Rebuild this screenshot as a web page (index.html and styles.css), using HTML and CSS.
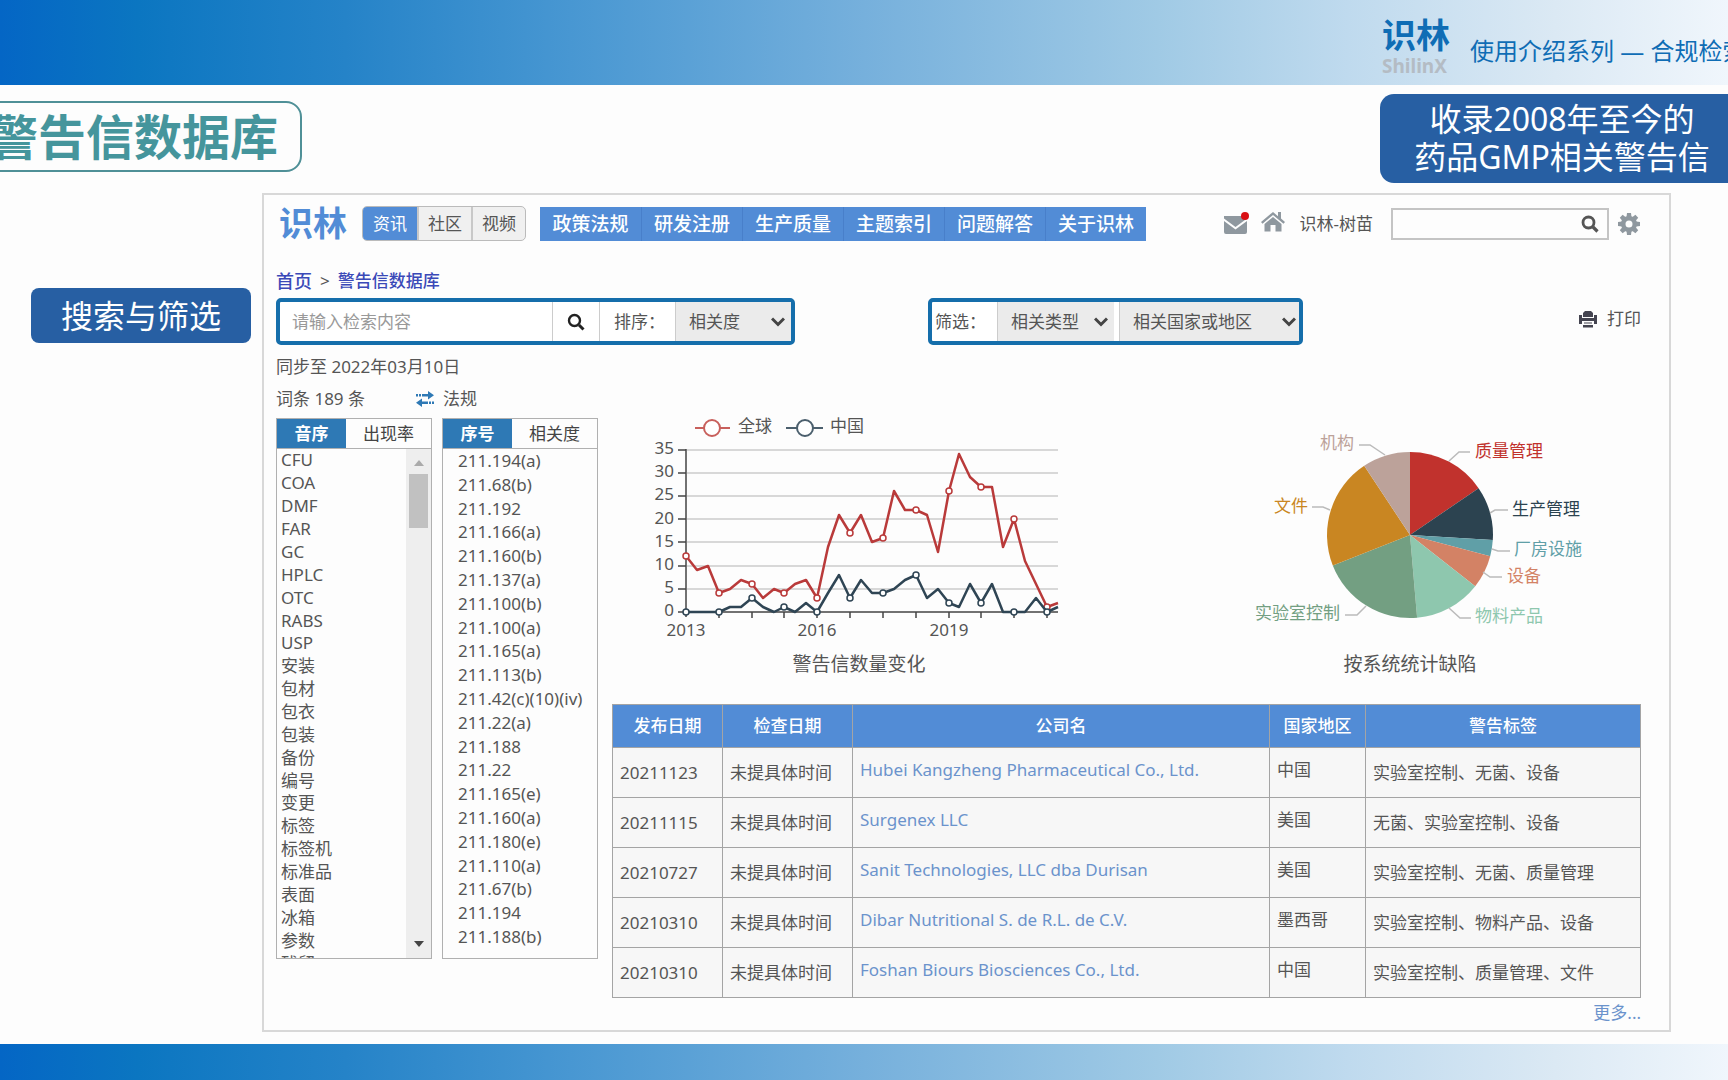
FILE: index.html
```html
<!DOCTYPE html>
<html lang="zh-CN">
<head>
<meta charset="utf-8">
<meta name="viewport" content="width=device-width, initial-scale=1">
<title>识林 警告信数据库</title>
<link rel="stylesheet" href="styles.css">
</head>
<body>
<header class="banner">
  <div class="banner-inner">
    <div class="brand"><span class="brand-cn">识林</span><span class="brand-en">ShilinX</span></div>
    <p class="series">使用介绍系列 — 合规检索</p>
  </div>
</header>

<div class="headline">
  <h1 class="title">警告信数据库</h1>
  <p class="callout">收录2008年至今的<br>药品GMP相关警告信</p>
</div>

<main class="stage">
  <aside class="side"><p class="tag">搜索与筛选</p></aside>

  <section class="app">
    <div class="topbar">
      <a class="logo" href="#">识林</a>
      <div class="segments">
        <button type="button" class="segment active">资讯</button>
        <button type="button" class="segment">社区</button>
        <button type="button" class="segment">视频</button>
      </div>
      <nav class="nav">
        <a href="#">政策法规</a><a href="#">研发注册</a><a href="#">生产质量</a><a href="#">主题索引</a><a href="#">问题解答</a><a href="#">关于识林</a>
      </nav>
      <div class="user">
        <a href="#" class="mail" aria-label="消息">
          <svg width="26" height="24" viewBox="0 0 26 24"><path fill="#8f989f" d="M1 4h23v2.500L12.500 15 1 6.500zM1 9l11.500 8.500L24 9v11a2 2 0 0 1-2 2H3a2 2 0 0 1-2-2z"/><circle cx="22" cy="4" r="4" fill="#d90f14"/></svg>
        </a>
        <a href="#" class="home" aria-label="首页">
          <svg width="24" height="22" viewBox="0 0 24 22"><path fill="#8f989f" d="M12 1 0 11l1.500 1.700L12 4l10.500 8.700L24 11l-4-3.400V1h-3v4.200zM12 6l-8.500 7v7.500h6V14h5v6.500h6V13z"/></svg>
        </a>
        <a href="#" class="username">识林-树苗</a>
        <form class="quick">
          <input type="text" aria-label="站内搜索">
          <button type="button" aria-label="搜索"><svg width="18" height="18" viewBox="0 0 18 18"><circle cx="7.500" cy="7.500" r="5.500" fill="none" stroke="#555" stroke-width="2.800"/><path d="m12 12 4.500 4.500" stroke="#555" stroke-width="3.200"/></svg></button>
        </form>
        <button type="button" class="gear" aria-label="设置"><svg width="24" height="24" viewBox="0 0 24 24"><g fill="#8f989f"><path fill-rule="evenodd" d="M12 4a8 8 0 1 1 0 16 8 8 0 0 1 0-16zm0 4.500a3.500 3.500 0 1 0 0 7 3.500 3.500 0 0 0 0-7z"/><path id="tooth" d="M9.500 5 10 1h4l.5 4z"/><use href="#tooth" transform="rotate(45 12 12)"/><use href="#tooth" transform="rotate(90 12 12)"/><use href="#tooth" transform="rotate(135 12 12)"/><use href="#tooth" transform="rotate(180 12 12)"/><use href="#tooth" transform="rotate(225 12 12)"/><use href="#tooth" transform="rotate(270 12 12)"/><use href="#tooth" transform="rotate(315 12 12)"/></g></svg></button>
      </div>
    </div>

    <nav class="crumbs"><a class="crumb-home" href="#">首页</a><span>&gt;</span><a href="#">警告信数据库</a></nav>

    <div class="toolbar">
      <form class="box search">
        <input type="text" placeholder="请输入检索内容" aria-label="检索内容">
        <button type="button" aria-label="检索"><svg width="18" height="18" viewBox="0 0 18 18"><circle cx="7.500" cy="7.500" r="5.500" fill="none" stroke="#222" stroke-width="2.400"/><path d="m12 12 4.500 4.500" stroke="#222" stroke-width="3"/></svg></button>
        <label for="sort">排序：</label>
        <div class="picker picker-sort"><select id="sort"><option>相关度</option></select><svg width="14" height="10" viewBox="0 0 14 10"><path d="m1 1.500 6 6 6-6"/></svg></div>
      </form>
      <form class="box filter">
        <label for="kind">筛选：</label>
        <div class="picker picker-kind"><select id="kind"><option>相关类型</option></select><svg width="14" height="10" viewBox="0 0 14 10"><path d="m1 1.500 6 6 6-6"/></svg></div>
        <div class="picker picker-area"><select aria-label="国家或地区"><option>相关国家或地区</option></select><svg width="14" height="10" viewBox="0 0 14 10"><path d="m1 1.500 6 6 6-6"/></svg></div>
      </form>
      <button type="button" class="print"><svg width="18" height="18" viewBox="0 0 18 18"><path fill="#444450" d="M4 7V3l2-2h6l2 2v4zM0 5h3v3h12V5h3v9h-3v-3H3v3H0zM5 12.500h8v1H5zM4 15h10v2.500H4z"/></svg>打印</button>
    </div>

    <div class="body">
      <div class="terms">
        <p class="synced">同步至 2022年03月10日</p>
        <div class="counts">
          <span class="count">词条 189 条</span>
          <svg width="18" height="16" viewBox="0 0 18 16"><g fill="#2e79b5"><path d="M6 3h6V0l6 4.200-6 4.200V5.500H6zM0 3h2v2.500H0zM3 3h2v2.500H3zM12 10.500H6v-3L0 11.800 6 16v-3h6zM13 10.500h2V13h-2zM16 10.500h2V13h-2z"/></g></svg>
          <span>法规</span>
        </div>
        <div class="lists">
          <section class="panel">
            <div class="tabs"><button type="button" class="tab active">音序</button><button type="button" class="tab">出现率</button></div>
            <div class="scroller">
              <ul class="words">
                <li>CFU</li><li>COA</li><li>DMF</li><li>FAR</li><li>GC</li><li>HPLC</li><li>OTC</li><li>RABS</li><li>USP</li><li>安装</li><li>包材</li><li>包衣</li><li>包装</li><li>备份</li><li>编号</li><li>变更</li><li>标签</li><li>标签机</li><li>标准品</li><li>表面</li><li>冰箱</li><li>参数</li><li>残留</li>
              </ul>
              <div class="scrollbar"><i class="arrow up"></i><i class="thumb"></i><i class="arrow down"></i></div>
            </div>
          </section>
          <section class="panel">
            <div class="tabs"><button type="button" class="tab active">序号</button><button type="button" class="tab">相关度</button></div>
            <div class="scroller">
              <ul class="rules">
                <li>211.194(a)</li><li>211.68(b)</li><li>211.192</li><li>211.166(a)</li><li>211.160(b)</li><li>211.137(a)</li><li>211.100(b)</li><li>211.100(a)</li><li>211.165(a)</li><li>211.113(b)</li><li>211.42(c)(10)(iv)</li><li>211.22(a)</li><li>211.188</li><li>211.22</li><li>211.165(e)</li><li>211.160(a)</li><li>211.180(e)</li><li>211.110(a)</li><li>211.67(b)</li><li>211.194</li><li>211.188(b)</li>
              </ul>
            </div>
          </section>
        </div>
      </div>

      <div class="results">
        <div class="charts">
          <figure>
            <svg class="chart" width="440" height="250" viewBox="0 0 440 250" role="img" aria-label="警告信数量变化">
              <g fill="#fff" stroke-width="2">
                <g stroke="#c8605c"><path d="M56 28h35"/><circle cx="73" cy="28" r="8"/></g>
                <g stroke="#4b5f6d"><path d="M147 28h37"/><circle cx="166" cy="28" r="8"/></g>
              </g>
              <text x="99" y="32">全球</text><text x="191" y="32">中国</text>
              <path d="M48 50h371M48 73h371M48 96h371M48 119h371M48 142h371M48 166h371M48 189h371" stroke="#ccc" stroke-width="1.500"/>
              <path d="M47 49v168M39 50h8M39 73h8M39 96h8M39 119h8M39 142h8M39 166h8M39 189h8M39 212h380M80 212v6M113 212v6M145 212v6M178 212v6M211 212v6M244 212v6M277 212v6M310 212v6M342 212v6M375 212v6M408 212v6" fill="none" stroke="#444" stroke-width="1.500"/>
              <g text-anchor="end">
                <text x="35" y="54">35</text><text x="35" y="77">30</text><text x="35" y="100">25</text><text x="35" y="124">20</text><text x="35" y="147">15</text><text x="35" y="170">10</text><text x="35" y="193">5</text><text x="35" y="216">0</text>
              </g>
              <g text-anchor="middle"><text x="47" y="236">2013</text><text x="178" y="236">2016</text><text x="310" y="236">2019</text></g>
              <g fill="none" stroke="#b93a3a" stroke-width="2.500" stroke-linejoin="round">
                <polyline points="47,156 58,170 69,166 80,193 91,189 102,180 113,184 124,198 135,189 145,193 156,184 167,180 178,198 189,147 200,115 211,133 222,115 233,142 244,138 255,91 266,110 277,110 288,115 299,152 310,91 320,54 331,77 342,87 353,87 364,147 375,119 386,161 397,184 408,207 419,203"/>
                <g fill="#fff" stroke-width="1.500"><circle cx="47" cy="156" r="3"/><circle cx="80" cy="193" r="3"/><circle cx="113" cy="184" r="3"/><circle cx="145" cy="193" r="3"/><circle cx="178" cy="198" r="3"/><circle cx="211" cy="133" r="3"/><circle cx="244" cy="138" r="3"/><circle cx="277" cy="110" r="3"/><circle cx="310" cy="91" r="3"/><circle cx="342" cy="87" r="3"/><circle cx="375" cy="119" r="3"/><circle cx="408" cy="207" r="3"/></g>
              </g>
              <g fill="none" stroke="#2f4554" stroke-width="2.500" stroke-linejoin="round">
                <polyline points="47,212 58,212 69,212 80,212 91,207 102,207 113,198 124,207 135,212 145,207 156,212 167,203 178,212 189,193 200,175 211,198 222,180 233,193 244,193 255,189 266,180 277,175 288,198 299,189 310,203 320,207 331,184 342,203 353,184 364,212 375,212 386,212 397,198 408,212 419,207"/>
                <g fill="#fff" stroke-width="1.500"><circle cx="47" cy="212" r="3"/><circle cx="80" cy="212" r="3"/><circle cx="113" cy="198" r="3"/><circle cx="145" cy="207" r="3"/><circle cx="178" cy="212" r="3"/><circle cx="211" cy="198" r="3"/><circle cx="244" cy="193" r="3"/><circle cx="277" cy="175" r="3"/><circle cx="310" cy="203" r="3"/><circle cx="342" cy="203" r="3"/><circle cx="375" cy="212" r="3"/><circle cx="408" cy="212" r="3"/></g>
              </g>
            </svg>
            <figcaption>警告信数量变化</figcaption>
          </figure>
          <figure>
            <svg class="chart" width="360" height="250" viewBox="0 -10 360 250" role="img" aria-label="按系统统计缺陷">
              <path fill="#c1322d" d="M180 125V42A83 83 0 0 1 248.600 78.200z"/>
              <path fill="#2c4350" d="M180 125 248.600 78.200A83 83 0 0 1 262.800 130.100z"/>
              <path fill="#609fa7" d="M180 125 262.800 130.100A83 83 0 0 1 260.200 146.200z"/>
              <path fill="#d38265" d="M180 125 260.200 146.200A83 83 0 0 1 245.200 176.300z"/>
              <path fill="#8ec7ae" d="M180 125 245.200 176.300A83 83 0 0 1 187.100 207.700z"/>
              <path fill="#739f82" d="M180 125 187.100 207.700A83 83 0 0 1 102.800 155.400z"/>
              <path fill="#c98622" d="M180 125 102.800 155.400A83 83 0 0 1 134.200 55.800z"/>
              <path fill="#bca29a" d="M180 125 134.200 55.800A83 83 0 0 1 180 42z"/>
              <path fill="none" stroke="#bbb" stroke-width="1.500" d="M219 51l10-9h11M260 103l5-3h13M262 139l6 2h12M253 162l7 5h12M219 198l11 10h11M136 196l-9 9h-12M100 100l-7-3H82M155 45l-15-10h-11"/>
              <text x="245" y="47" fill="#c1322d">质量管理</text>
              <text x="282" y="105" fill="#2c4350">生产管理</text>
              <text x="284" y="145" fill="#609fa7">厂房设施</text>
              <text x="277" y="172" fill="#d38265">设备</text>
              <text x="245" y="212" fill="#8ec7ae">物料产品</text>
              <g text-anchor="end">
                <text x="110" y="209" fill="#739f82">实验室控制</text>
                <text x="78" y="102" fill="#c98622">文件</text>
                <text x="124" y="39" fill="#bca29a">机构</text>
              </g>
            </svg>
            <figcaption>按系统统计缺陷</figcaption>
          </figure>
        </div>

        <table class="letters">
          <colgroup><col class="c-date"><col class="c-check"><col><col class="c-area"><col class="c-tags"></colgroup>
          <thead><tr><th>发布日期</th><th>检查日期</th><th>公司名</th><th>国家地区</th><th>警告标签</th></tr></thead>
          <tbody>
            <tr><td>20211123</td><td>未提具体时间</td><td class="raised"><a href="#">Hubei Kangzheng Pharmaceutical Co., Ltd.</a></td><td class="raised">中国</td><td>实验室控制、无菌、设备</td></tr>
            <tr><td>20211115</td><td>未提具体时间</td><td class="raised"><a href="#">Surgenex LLC</a></td><td class="raised">美国</td><td>无菌、实验室控制、设备</td></tr>
            <tr><td>20210727</td><td>未提具体时间</td><td class="raised"><a href="#">Sanit Technologies, LLC dba Durisan</a></td><td class="raised">美国</td><td>实验室控制、无菌、质量管理</td></tr>
            <tr><td>20210310</td><td>未提具体时间</td><td class="raised"><a href="#">Dibar Nutritional S. de R.L. de C.V.</a></td><td class="raised">墨西哥</td><td>实验室控制、物料产品、设备</td></tr>
            <tr><td>20210310</td><td>未提具体时间</td><td class="raised"><a href="#">Foshan Biours Biosciences Co., Ltd.</a></td><td class="raised">中国</td><td>实验室控制、质量管理、文件</td></tr>
          </tbody>
        </table>
        <a class="more" href="#">更多...</a>
      </div>
    </div>
  </section>
</main>
<footer class="footer"></footer>
</body>
</html>
```
FILE: styles.css
```css
* { box-sizing: border-box; }

:root {
  --blue: #528cd6;
  --deep: #275fa3;
  --frame: #156eab;
  --line: #b0b0b0;
  --text: #555;
  --sweep: linear-gradient(90deg, #0466c5 0%, #0b76c1 8%, #2583c8 20%, #4897d2 33%, #76b0dc 50%, #a0cae5 67%, #bfdaee 78%, #dbe9f4 90%, #f0f6fc 100%);
}

body {
  margin: 0;
  min-height: 100vh;
  display: flex;
  flex-direction: column;
  overflow-x: hidden;
  background: #fdfdfd;
  color: var(--text);
  font: 17px/24px "Noto Sans", "Noto Sans CJK SC", sans-serif;
}

p, h1, ul, figure { margin: 0; padding: 0; }
ul { list-style: none; }
a { color: inherit; text-decoration: none; }
svg { display: block; }
button, input, select {
  margin: 0;
  padding: 0;
  border: 0;
  border-radius: 0;
  background: none;
  color: inherit;
  font: inherit;
}

/* banner */
.banner { height: 85px; background: var(--sweep); display: flex; justify-content: flex-end; }
.banner-inner { flex: 0 0 346px; display: flex; gap: 18px; overflow: hidden; white-space: nowrap; color: #0f6db5; }
.brand { flex: 0 0 70px; display: flex; flex-direction: column; padding-top: 17px; font-weight: 700; }
.brand-cn { font-size: 34px; line-height: 37px; }
.brand-en { font-size: 19px; line-height: 24px; color: #b4bcc4; }
.series { font-size: 24px; line-height: 32px; padding-top: 35px; }

.headline { display: flex; justify-content: space-between; align-items: flex-start; height: 108px; padding-top: 9px; }
.title {
  margin: 7px 0 0 -40px;
  padding: 0 22px 0 28px;
  border: 2px solid #4f9097;
  border-radius: 16px;
  color: #45959c;
  font-size: 48px;
  line-height: 67px;
}
.callout {
  flex: 0 0 364px;
  margin-right: -16px;
  padding: 6px 0 7px;
  border-radius: 14px;
  background: var(--deep);
  color: #fff;
  font-size: 32px;
  line-height: 38px;
  text-align: center;
}

/* stage */
.stage { flex: 1; display: flex; align-items: flex-start; padding-right: 57px; margin-bottom: 11px; }
.side { flex: 0 0 262px; padding: 95px 11px 0 31px; }
.tag { border-radius: 8px; background: var(--deep); color: #fff; font-size: 32px; line-height: 55px; text-align: center; }

.app { flex: 1; min-width: 0; border: 2px solid #d8d8d8; padding: 11px 28px 5px 12px; }

.topbar { display: flex; align-items: center; height: 35px; }
.logo { margin-left: 3px; color: var(--blue); font-size: 34px; line-height: 35px; font-weight: 700; }
.segments { display: flex; margin-left: 15px; height: 35px; border: 1px solid #bbb; border-radius: 5px; overflow: hidden; background: #f0f0f0; }
.segment { width: 54px; border-left: 2px solid #c8c8c8; }
.segment.active { border: 0; background: var(--blue); color: #fff; }
.nav { display: flex; margin-left: 14px; background: var(--blue); color: #fff; font-size: 19px; line-height: 34px; font-weight: 500; }
.nav a { width: 101px; text-align: center; border-left: 1px solid #487fca; }
.nav a:first-child { border-left: 0; }
.user { display: flex; align-items: center; margin-left: auto; }
.home { margin-left: 12px; padding-bottom: 3px; }
.username { margin-left: 15px; }
.quick { display: flex; align-items: center; width: 218px; height: 32px; margin: 0 8px 0 18px; border: 2px solid #c4c4c4; padding-right: 8px; }
.quick input { flex: 1; min-width: 0; height: 28px; }

.crumbs { display: flex; gap: 8px; margin-top: 28px; color: #3a49b8; font-weight: 500; }
.crumb-home { font-size: 18px; }
.crumbs span { color: var(--text); font-weight: 400; }

/* toolbar */
.toolbar { display: flex; margin: 5px 0 0; }
.box { display: flex; height: 47px; border: 4px solid var(--frame); border-radius: 5px; background: #fff; line-height: 39px; }
.search { width: 519px; }
.search input { width: 273px; padding-left: 12px; border-right: 1px solid #ccc; }
.search input::placeholder { color: #999; opacity: 1; }
.search button { width: 47px; display: grid; place-items: center; border-right: 1px solid #ccc; }
.search label { width: 75px; padding-left: 14px; }
.filter { width: 375px; margin-left: 133px; }
.filter label { width: 65px; padding-left: 3px; }
.picker { display: grid; align-items: center; background: #ebebeb; }
.picker select, .picker svg { grid-area: 1 / 1; }
.picker select { appearance: none; width: 100%; height: 39px; padding-left: 13px; border-left: 1px solid #ccc; }
.picker svg { justify-self: end; margin-right: 6px; fill: none; stroke: #444; stroke-width: 3; pointer-events: none; }
.picker-sort { flex: 1; }
.picker-kind { width: 117px; margin-right: 5px; }
.picker-area { flex: 1; }
.picker-area svg { margin-right: 3px; }
.print { display: flex; align-items: center; gap: 10px; height: 42px; margin-left: auto; }

/* lists */
.body { display: grid; grid-template-columns: 322px minmax(0, 1fr); column-gap: 14px; }
.synced { margin-top: 10px; }
.counts { display: flex; align-items: center; margin-top: 8px; }
.count { width: 140px; }
.counts svg { margin-right: 9px; }
.lists { display: flex; gap: 10px; margin-top: 7px; }
.panel { width: 156px; border: 1px solid var(--line); }
.tabs { display: flex; height: 30px; border-bottom: 1px solid var(--line); color: #444; }
.tab { flex: 1; }
.tab.active { flex: 0 0 69px; background: #2e79b5; color: #fff; font-weight: 700; }
.scroller { display: flex; justify-content: space-between; height: 509px; overflow: hidden; }
.words, .rules { display: grid; grid-auto-rows: 1fr; align-items: center; line-height: 22px; white-space: nowrap; }
.words { height: 526px; padding-left: 4px; }
.rules { height: 500px; padding-left: 15px; }
.scrollbar { display: flex; flex-direction: column; align-items: center; width: 25px; padding: 11px 0; background: #eee; }
.arrow { border: 5px solid transparent; }
.up { border-top: 0; border-bottom: 6px solid #aaa; }
.down { margin-top: auto; border-bottom: 0; border-top: 6px solid #444; }
.thumb { width: 19px; height: 54px; margin-top: 8px; background: #c1c1c1; }

/* charts and table */
.results { display: flex; flex-direction: column; padding-top: 55px; }
.charts { display: flex; justify-content: space-between; padding: 0 51px 0 27px; margin-bottom: 28px; }
.chart { font-size: 17px; fill: var(--text); overflow: visible; }
figcaption { margin-top: 2px; font-size: 19px; text-align: center; }

.letters { width: 100%; table-layout: fixed; border-collapse: collapse; color: var(--text); }
.c-date { width: 110px; }
.c-check { width: 130px; }
.c-area { width: 96px; }
.c-tags { width: 275px; }
.letters th, .letters td { border: 1px solid #a4a4a4; padding: 0 7px; white-space: nowrap; }
.letters th { height: 43px; background: var(--blue); color: #fff; font-weight: 500; }
.letters td { height: 50px; background: #f7f7f7; }
.letters .raised { padding-bottom: 6px; }
.letters a, .more { color: #6b93cc; }
.more { align-self: flex-end; margin-top: 3px; }

.footer { height: 36px; background: var(--sweep); }
```
